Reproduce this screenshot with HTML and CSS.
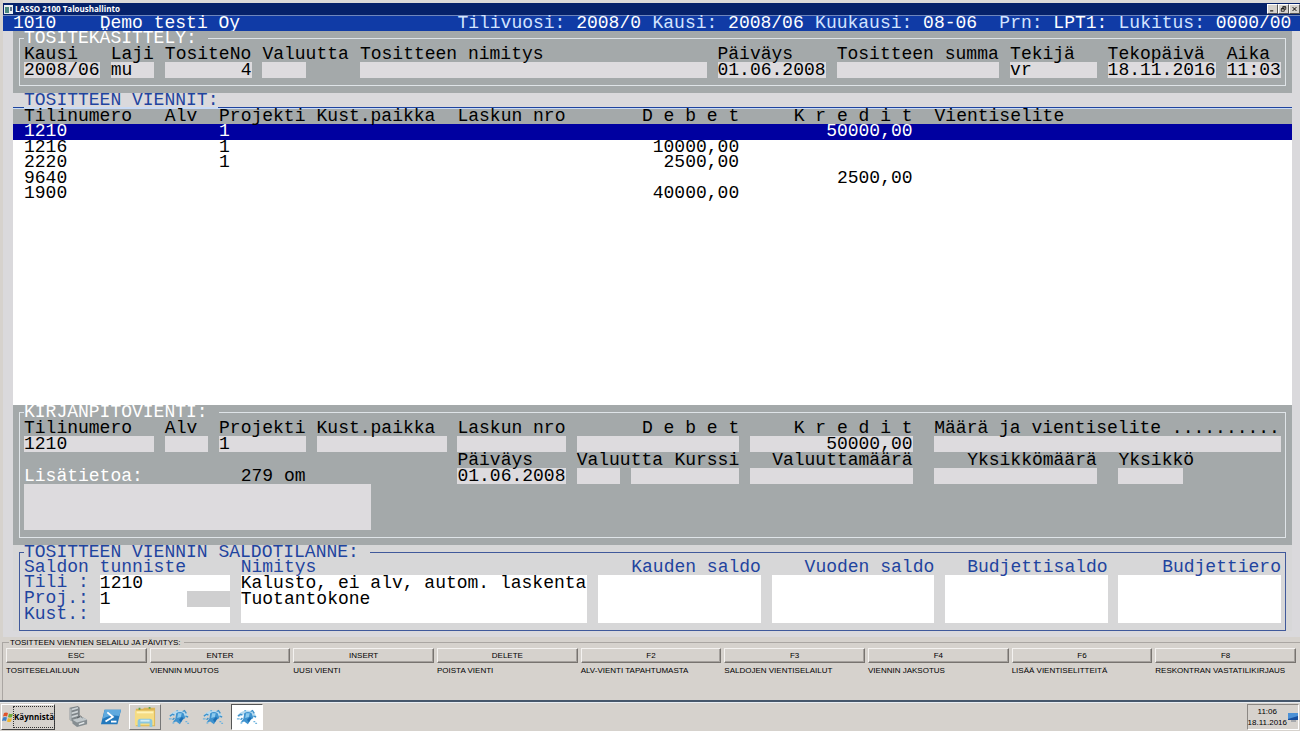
FILE: index.html
```html
<!DOCTYPE html>
<html lang="fi">
<head>
    <meta charset="UTF-8">
    <title>LASSO 2100 Taloushallinto</title>
    <link rel="stylesheet" href="styles.css">
</head>
<body>
    <header class="titlebar">
        <svg class="app-icon" viewBox="0 0 9 9"><rect width="9" height="9" fill="#e8eef0"/><rect x="1" y="2" width="4" height="6" fill="#4b8a80"/><rect x="6" y="2" width="2" height="4" fill="#5b6f86"/></svg>
        <h1>LASSO 2100 Taloushallinto</h1>
        <div class="window-buttons">
            <button aria-label="Pienennä"><svg viewBox="0 0 8 8"><path d="M1 6.5h4" stroke="#000" stroke-width="1.4"/></svg></button>
            <button aria-label="Palauta"><svg viewBox="0 0 8 8"><path d="M3 3V1h4v3.500H5.500M3 1.300h4M1 3.500h4v3.500H1zM1 3.800h4" fill="none" stroke="#000"/></svg></button>
            <button aria-label="Sulje"><svg viewBox="0 0 8 8"><path d="M1.500 1.500l5 5M6.500 1.500l-5 5" stroke="#000" stroke-width="1.300"/></svg></button>
        </div>
    </header>

    <div class="infobar">
        <span class="company-no">1010</span>
        <span class="company">Demo testi Oy</span>
        <span class="year">Tilivuosi: <b>2008/0</b></span>
        <span class="period">Kausi: <b>2008/06</b></span>
        <span class="month">Kuukausi: <b>08-06</b></span>
        <span class="printer">Prn: <b>LPT1:</b></span>
        <span class="lock">Lukitus: <b>0000/00</b></span>
    </div>

    <main>
        <!-- Voucher -->
        <section class="panel voucher">
            <fieldset>
                <legend>TOSITEKÄSITTELY:</legend>
                <div class="columns">
                    <label class="v-kausi">Kausi<input type="text" value="2008/06"></label>
                    <label class="v-laji">Laji<input type="text" value="mu"></label>
                    <label class="v-no">TositeNo<input type="text" class="right" value="4"></label>
                    <label class="v-valuutta">Valuutta<input type="text"></label>
                    <label class="v-nimitys">Tositteen nimitys<input type="text"></label>
                    <label class="v-paivays">Päiväys<input type="text" value="01.06.2008"></label>
                    <label class="v-summa">Tositteen summa<input type="text"></label>
                    <label class="v-tekija">Tekijä<input type="text" value="vr"></label>
                    <label class="v-tekopaiva">Tekopäivä<input type="text" value="18.11.2016"></label>
                    <label class="v-aika">Aika<input type="text" value="11:03"></label>
                </div>
            </fieldset>
        </section>

        <!-- Voucher entries -->
        <section class="entries">
            <h2>TOSITTEEN VIENNIT:</h2>
            <table>
                <thead>
                    <tr><th>Tilinumero</th><th>Alv</th><th>Projekti</th><th>Kust.paikka</th><th>Laskun nro</th><th class="right">D e b e t</th><th class="right">K r e d i t</th><th class="note">Vientiselite</th></tr>
                </thead>
                <tbody>
                    <tr class="selected"><td>1210</td><td></td><td>1</td><td></td><td></td><td class="right"></td><td class="right">50000,00</td><td></td></tr>
                    <tr><td>1216</td><td></td><td>1</td><td></td><td></td><td class="right">10000,00</td><td class="right"></td><td></td></tr>
                    <tr><td>2220</td><td></td><td>1</td><td></td><td></td><td class="right">2500,00</td><td class="right"></td><td></td></tr>
                    <tr><td>9640</td><td></td><td></td><td></td><td></td><td class="right"></td><td class="right">2500,00</td><td></td></tr>
                    <tr><td>1900</td><td></td><td></td><td></td><td></td><td class="right">40000,00</td><td class="right"></td><td></td></tr>
                </tbody>
            </table>
        </section>

        <!-- Selected entry -->
        <section class="panel entry">
            <fieldset>
                <legend>KIRJANPITOVIENTI:</legend>
                <div class="columns">
                    <label class="e-tili">Tilinumero<input type="text" value="1210"></label>
                    <label class="e-alv">Alv<input type="text"></label>
                    <label class="e-projekti">Projekti<input type="text" value="1"></label>
                    <label class="e-kust">Kust.paikka<input type="text"></label>
                    <label class="e-lasku">Laskun nro<input type="text"></label>
                    <label class="e-debet right">D e b e t<input type="text" class="right"></label>
                    <label class="e-kredit right">K r e d i t<input type="text" class="right" value="50000,00"></label>
                    <label class="e-selite">Määrä ja vientiselite ..........<input type="text"></label>
                </div>
                <div class="columns">
                    <label class="e-lisatieto" for="lisatieto">Lisätietoa:</label>
                    <span class="e-om">279 om</span>
                    <label class="e-lasku">Päiväys<input type="text" value="01.06.2008"></label>
                    <label class="e-valuutta">Valuutta<input type="text"></label>
                    <label class="e-kurssi right">Kurssi<input type="text"></label>
                    <label class="e-kredit right">Valuuttamäärä<input type="text"></label>
                    <label class="e-yksikkomaara right">Yksikkömäärä<input type="text"></label>
                    <label class="e-yksikko">Yksikkö<input type="text"></label>
                    <textarea id="lisatieto" class="e-teksti"></textarea>
                </div>
            </fieldset>
        </section>

        <!-- Balances of the entry -->
        <section class="balance">
            <fieldset>
                <legend>TOSITTEEN VIENNIN SALDOTILANNE:</legend>
                <div class="columns">
                    <span class="b-tunniste">Saldon tunniste</span>
                    <label class="b-row1" for="b-tili">Tili :</label>
                    <input class="b-tili" id="b-tili" type="text" value="1210">
                    <label class="b-row2" for="b-proj">Proj.:</label>
                    <input class="b-proj" id="b-proj" type="text" value="1">
                    <span class="b-blank"></span>
                    <label class="b-row3" for="b-kust">Kust.:</label>
                    <input class="b-kust" id="b-kust" type="text">
                    <label class="b-nimitys">Nimitys<textarea>Kalusto, ei alv, autom. laskenta
Tuotantokone</textarea></label>
                    <label class="b-kausi right">Kauden saldo<textarea></textarea></label>
                    <label class="b-vuosi right">Vuoden saldo<textarea></textarea></label>
                    <label class="b-budjetti right">Budjettisaldo<textarea></textarea></label>
                    <label class="b-ero right">Budjettiero<textarea></textarea></label>
                </div>
            </fieldset>
        </section>
    </main>

    <!-- Function keys -->
    <fieldset class="keys">
        <legend>TOSITTEEN VIENTIEN SELAILU JA PÄIVITYS:</legend>
        <div class="key-list">
            <div class="key"><button aria-describedby="k1">ESC</button><span id="k1">TOSITESELAILUUN</span></div>
            <div class="key"><button aria-describedby="k2">ENTER</button><span id="k2">VIENNIN MUUTOS</span></div>
            <div class="key"><button aria-describedby="k3">INSERT</button><span id="k3">UUSI VIENTI</span></div>
            <div class="key"><button aria-describedby="k4">DELETE</button><span id="k4">POISTA VIENTI</span></div>
            <div class="key"><button aria-describedby="k5">F2</button><span id="k5">ALV-VIENTI TAPAHTUMASTA</span></div>
            <div class="key"><button aria-describedby="k6">F3</button><span id="k6">SALDOJEN VIENTISELAILUT</span></div>
            <div class="key"><button aria-describedby="k7">F4</button><span id="k7">VIENNIN JAKSOTUS</span></div>
            <div class="key"><button aria-describedby="k8">F6</button><span id="k8">LISÄÄ VIENTISELITTEITÄ</span></div>
            <div class="key"><button aria-describedby="k9">F8</button><span id="k9">RESKONTRAN VASTATILIKIRJAUS</span></div>
        </div>
    </fieldset>

    <svg class="symbols" aria-hidden="true">
        <symbol id="globe" viewBox="0 0 24 20">
            <path d="M2 8q4-5 10-5 7 0 10 6l-4 1q-4-4-8-3-4 0-6 3z" fill="#b5d9ef"/>
            <path d="M9 6q4-3 8 0l2 5-3 2-3 5-4-3-4 1 3-4z" fill="#3f93cf"/>
            <path d="M11 6l4 0-1 4-4 1z" fill="#8ccaee"/>
            <path d="M12 13l3-3 2 1-3 5z" fill="#1c6fb4"/>
            <path d="M2 9l3-2 2 1M16 4l2-1 2 3M19 9l3 1M5 13l2-2" fill="none" stroke="#3e92cb" stroke-width="1.500"/>
            <path d="M1 12h3M19 15h2M5 17l2-1M21 17h2M9 3h2" stroke="#6fb4de" stroke-width="1.500"/>
        </symbol>
    </svg>

    <footer class="taskbar">
        <button class="start">
            <svg viewBox="0 0 12 12"><path d="M2 2q2-1 4 0L5 5.500q-2-1-4 0z" fill="#e0532a"/><path d="M7 2.500q2 1 4 0L10 6q-2 1-4 0z" fill="#72aa3a"/><path d="M1 6.500q2-1 4 0L4 10q-2-1-4 0z" fill="#3d7fc8"/><path d="M6 7q2 1 4 0l-1 3.500q-2 1-4 0z" fill="#f0b52c"/></svg>
            <span>Käynnistä</span>
        </button>
        <button class="task" aria-label="Palvelinten hallinta">
            <svg viewBox="0 0 24 24"><path d="M4 2l9-2 2 2v13l-8 2-3-2z" fill="#7d8488"/><path d="M6 3l7-2v2L6 5zM6 7l7-2v2L6 9zM6 11l7-2v2l-7 2z" fill="#cdd3d6"/><path d="M4 2l2 2v13l-2-2z" fill="#aeb5b8"/><path d="M7 15l11-3 5 3v5l-11 3-5-4z" fill="#858d91"/><path d="M7 15l11-3 5 3-11 3z" fill="#c1c8cb"/><path d="M12 13l4-2 2 2" fill="none" stroke="#555d61"/><path d="M14 20l6-2" stroke="#e3e8ea" stroke-width="1.500"/></svg>
        </button>
        <button class="task" aria-label="PowerShell">
            <svg viewBox="0 0 24 24"><path d="M5 4h18l-4 16H1z" fill="#2379bd"/><path d="M5 4h18l-2 7q-8-2-18 3z" fill="#5faadf"/><path d="M8 7l6 5-8 5" fill="none" stroke="#fff" stroke-width="2"/><path d="M12 17h6" stroke="#fff" stroke-width="2"/></svg>
        </button>
        <button class="task raised" aria-label="Resurssienhallinta">
            <svg viewBox="0 0 24 24"><path d="M2 3h8l1-1h12v20H2z" fill="#dcb656"/><path d="M1 5h21v16H1z" fill="#f5dc83"/><path d="M3 6h18v2H3z" fill="#fff3b8"/><path d="M4 23v-6q0-3 3-3h10q3 0 3 3v6h-3v-4H7v4z" fill="#8ac7df"/><path d="M7 15h10v2H7z" fill="#d4eef6"/><path d="M6 2v2M17 1v2" stroke="#5fa24f" stroke-width="2"/></svg>
        </button>
        <button class="task" aria-label="Lasso 1"><svg viewBox="0 0 24 20"><use href="#globe"/></svg></button>
        <button class="task" aria-label="Lasso 2"><svg viewBox="0 0 24 20"><use href="#globe"/></svg></button>
        <button class="task active" aria-label="Lasso 3"><svg viewBox="0 0 24 20"><use href="#globe"/></svg></button>
        <div class="tray">
            <div class="clock">11:06<br>18.11.2016</div>
            <svg viewBox="0 0 10 9"><rect width="10" height="7" fill="#174f9e"/><path d="M0 0h10v3L0 6z" fill="#4c91d6"/><path d="M3 8h5" stroke="#727c8b"/></svg>
        </div>
    </footer>
</body>
</html>
```
FILE: styles.css
```css
* {
    box-sizing: border-box;
}
body {
    margin: 0;
    min-height: 100vh;
    display: flex;
    flex-direction: column;
    background-color: #d6d2cd;
    color: black;
    font-family: "Liberation Mono", monospace;
    font-size: 18px;
    line-height: 16px;
}
h1, h2, fieldset, legend {
    margin: 0;
    padding: 0;
    font-weight: normal;
}
button, input, textarea {
    font: inherit;
    color: inherit;
    border: none;
    border-radius: 0;
    margin: 0;
    padding: 0;
}
.right {
    text-align: right;
}

/* Title bar */
.titlebar {
    display: flex;
    align-items: center;
    gap: 2px;
    height: 15px;
    padding: 0 0 0 1px;
    border-top: 3px solid #dcdad8;
    margin-left: 3px;
    background-color: #06226a;
    color: white;
}
.app-icon {
    width: 9px;
    height: 9px;
}
.titlebar h1 {
    flex: 1;
    font: bold 8px/12px "Open Sans", sans-serif;
}
.window-buttons {
    display: flex;
}
.window-buttons button {
    display: flex;
    width: 11px;
    height: 10px;
    padding: 1px;
    background-color: #d6d2cd;
    border: 1px solid;
    border-color: white #555 #555 white;
}
.window-buttons svg {
    width: 100%;
    height: 100%;
}
.infobar {
    display: grid;
    grid-template-columns: repeat(118, minmax(0, 1fr));
    height: 16px;
    margin-left: 3px;
    padding: 0 8px 0 10px;
    border-top: 1px solid #6f87bd;
    background-color: #103ba6;
    color: #d3e4ff;
    line-height: 14px;
    white-space: nowrap;
}
.infobar span {
    grid-row: 1;
}
.infobar b {
    font-weight: normal;
    color: white;
}
.infobar .company-no {
    grid-column: 1 / span 4;
    color: white;
}
.infobar .company {
    grid-column: 9 / span 13;
    color: white;
}
.year { grid-column: 42 / span 17; }
.period { grid-column: 60 / span 14; }
.month { grid-column: 75 / span 15; }
.printer { grid-column: 92 / span 10; }
.lock { grid-column: 103 / span 16; }

/* Work area */
main {
    flex: 1;
    display: flex;
    flex-direction: column;
    margin-left: 3px;
    padding: 0 8px 6px 10px;
    background-color: #dad9dc;
}
.panel {
    background-color: #a4a9aa;
}
main fieldset {
    margin: 0 6px;
    padding: 0 4px;
    border: 1px solid #dfe4e8;
}
main legend {
    height: 15px;
    padding-right: 11px;
    line-height: 15px;
}
.panel legend, .e-lisatieto {
    color: white;
}
.columns {
    display: grid;
    grid-template-columns: repeat(116, minmax(0, 1fr));
    white-space: nowrap;
}
.columns label {
    display: block;
}
.columns label input {
    display: block;
    width: 100%;
}
.columns input, .columns textarea {
    height: 16px;
    background-color: #dddbde;
}
textarea {
    display: block;
    width: 100%;
    resize: none;
    overflow: hidden;
}

/* Voucher */
.voucher {
    padding-bottom: 7px;
}
.voucher fieldset {
    padding-bottom: 7px;
}
.v-kausi { grid-column: 1 / span 7; }
.v-laji { grid-column: 9 / span 4; }
.v-no { grid-column: 14 / span 8; }
.v-valuutta { grid-column: 23 / span 4; }
.v-nimitys { grid-column: 32 / span 32; }
.v-paivays { grid-column: 65 / span 10; }
.v-summa { grid-column: 76 / span 15; }
.v-tekija { grid-column: 92 / span 8; }
.v-tekopaiva { grid-column: 101 / span 10; }
.v-aika { grid-column: 112 / span 5; }

/* Voucher entries */
.entries {
    flex: 1;
    background-color: white;
}
.entries h2 {
    display: flex;
    height: 16px;
    background: linear-gradient(#dad9dc 14px, #c8daf5 14px);
    color: #1f449f;
    font-size: 18px;
    line-height: 15px;
}
.entries h2::before, .entries h2::after {
    content: "";
    width: 11px;
    height: 14px;
    border-bottom: 1px solid #1f449f;
}
.entries h2::after {
    flex: 1;
}
table, thead, tbody {
    display: block;
}
tr {
    display: grid;
    grid-template-columns: 13fr 5fr 9fr 13fr 11fr 15fr 16fr 34fr;
    height: 16px;
    padding: 0 11px;
    line-height: 15px;
    white-space: nowrap;
}
thead tr, tr:nth-child(even) {
    height: 15px;
}
th, td {
    padding: 0;
    min-width: 0;
    font-weight: normal;
    text-align: left;
}
th.right, td.right {
    text-align: right;
}
th.note {
    padding-left: 22px;
}
thead tr {
    background-color: #a4a9aa;
}
.selected {
    background-color: #0000a0;
    color: white;
}

/* Selected entry */
.entry {
    padding-bottom: 7px;
}
.entry fieldset {
    padding-bottom: 7px;
}
.e-tili { grid-column: 1 / span 12; }
.e-alv { grid-column: 14 / span 4; }
.e-projekti { grid-column: 19 / span 8; }
.e-kust { grid-column: 28 / span 12; }
.e-lasku { grid-column: 41 / span 10; }
.e-debet { grid-column: 52 / span 15; }
.e-kredit { grid-column: 68 / span 15; }
.e-selite { grid-column: 85 / span 32; }
.e-lisatieto { grid-column: 1 / span 11; align-self: end; }
.e-om { grid-column: 21 / span 6; align-self: end; }
.e-valuutta { grid-column: 52 / span 4; }
.e-kurssi { grid-column: 57 / span 10; }
.e-yksikkomaara { grid-column: 85 / span 15; }
.e-yksikko { grid-column: 102 / span 6; }
.columns .e-teksti {
    grid-column: 1 / span 32;
    height: 46px;
}

/* Balances */
.balance {
    background-color: #d7d7d8;
    color: #1f449f;
}
.balance fieldset {
    padding-bottom: 7px;
    border-color: #40599b;
}
.balance .columns {
    grid-template-rows: 15px 16px 16px 16px;
}
.balance input, .balance textarea {
    background-color: white;
    color: black;
    width: 100%;
}
.balance label textarea {
    height: 48px;
}
.b-tunniste { grid-area: 1 / 1 / 2 / 16; }
.b-row1 { grid-area: 2 / 1 / 3 / 8; }
.b-row2 { grid-area: 3 / 1 / 4 / 8; }
.b-row3 { grid-area: 4 / 1 / 5 / 8; }
.b-tili { grid-area: 2 / 8 / 3 / 20; }
.b-proj { grid-area: 3 / 8 / 4 / 16; }
.b-kust { grid-area: 4 / 8 / 5 / 20; }
.b-blank {
    grid-area: 3 / 16 / 4 / 20;
    background-color: #cfcfd0;
}
.b-nimitys { grid-area: 1 / 21 / 5 / 53; }
.b-kausi { grid-area: 1 / 54 / 5 / 69; }
.b-vuosi { grid-area: 1 / 70 / 5 / 85; }
.b-budjetti { grid-area: 1 / 86 / 5 / 101; }
.b-ero { grid-area: 1 / 102 / 5 / 117; }
.balance .columns > label, .b-tunniste {
    line-height: 15px;
}
.balance .columns textarea {
    line-height: 16px;
}

/* Function keys */
.keys {
    margin: 0 0 0 2px;
    padding: 0 4px 24px 3px;
    border: 1px solid #aaa6a2;
    border-bottom: none;
    border-right: none;
    font-family: "Liberation Sans", sans-serif;
    font-size: 8px;
    line-height: 11px;
}
.keys legend {
    margin-left: 3px;
    padding: 0 3px 0 1px;
}
.key-list {
    display: grid;
    grid-template-columns: repeat(9, minmax(0, 1fr));
    gap: 3px;
}
.key {
    display: flex;
    flex-direction: column;
    gap: 2px;
    white-space: nowrap;
}
.key button {
    height: 15px;
    background-color: #d6d2cd;
    border: 1px solid;
    border-color: #f4f2f0 #77736f #77736f #f4f2f0;
    box-shadow: inset -1px -1px #a5a19d;
}

/* Taskbar */
.symbols {
    display: none;
}
.taskbar {
    display: flex;
    align-items: center;
    height: 31px;
    border-top: 2px solid #46576b;
    box-shadow: inset 0 1px #e8edf2;
    padding: 1px 1px 0;
    gap: 2px;
    background-color: #d6d2cd;
}
.taskbar button {
    display: flex;
    align-items: center;
    justify-content: center;
    height: 26px;
    background: none;
}
.taskbar .start {
    width: 54px;
    background-color: #d6d2cd;
    border: 1px solid;
    border-color: white #444 #444 white;
    font: bold 8px/12px "Open Sans", sans-serif;
    margin-right: 4px;
}
.start span {
    outline: 1px dotted #333;
    line-height: 20px;
}
.start svg {
    width: 12px;
    height: 12px;
}
.taskbar .task {
    width: 32px;
}
.task svg {
    width: 22px;
    height: 22px;
}
.taskbar .raised {
    border: 1px solid;
    border-color: white #777 #777 white;
}
.taskbar .active {
    background-color: white;
    border: 1px solid;
    border-color: #555 white white #555;
}
.tray {
    display: flex;
    align-items: center;
    gap: 1px;
    height: 26px;
    margin-left: auto;
    border: 1px solid;
    border-color: #8c8884 white white #8c8884;
    font: 8px/11px "Liberation Sans", sans-serif;
    text-align: center;
}
.tray svg {
    width: 10px;
    height: 9px;
}
```
